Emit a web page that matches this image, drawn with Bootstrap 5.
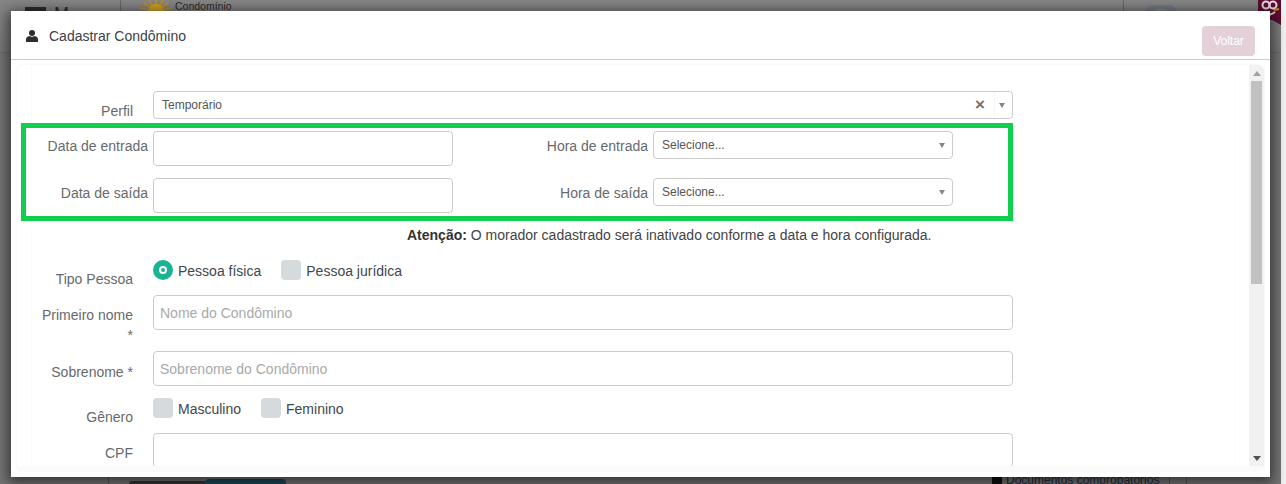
<!DOCTYPE html>
<html lang="pt-BR">
<head>
<meta charset="utf-8">
<title>Cadastrar Condômino</title>
<link href="https://cdn.jsdelivr.net/npm/bootstrap@5.3.0/dist/css/bootstrap.min.css" rel="stylesheet">
<style>
html,body{height:484px;overflow:hidden;background:#f1f1f1;font-family:"Liberation Sans",Arial,sans-serif;font-size:14px;color:#676a6c}
.back-page{width:1281px;height:484px;background:#757575;position:relative}
.back-top{height:53px;background:linear-gradient(#868686,#777);border-bottom:1px solid #6a6a6a;position:relative}
.back-menu{width:121px;height:52px;border-right:1px solid #666;padding:7px 0 0 25px;gap:8px}
.burger{width:21px;height:4px;background:#2c2c2c;flex:none}
.back-m{font-size:18px;line-height:14px;color:#2c2c2c}
.back-logo{gap:1px;padding-left:17px;height:11px;overflow:hidden}
.back-name{font-size:10.5px;line-height:10px;color:#2b2b2b;margin-top:1px}
.back-user{width:135px;height:52px;border-left:1px solid #666;padding-left:18px}
.back-bottom{height:8px;overflow:hidden;padding-left:108px;position:absolute;left:0;right:0;bottom:0;border-left:0}
.back-cell{border-left:1px solid #555;height:8px}
.btn-dark-back{width:76px;height:3px;margin:5px 0 0 20px;background:#333;border-radius:3px 0 0 0}
.btn-teal-back{width:81px;height:5px;margin-top:3px;background:#1d4a56;border-radius:4px 4px 0 0}
.docs{width:188px;margin-left:696px;padding-left:10px;border-right:1px solid #555;gap:4px;font-size:12px;line-height:8px;color:#1f2b38;height:8px;white-space:nowrap}
.doc-ico{width:10px;height:8px;background:#111;flex:none}
.docs-end{width:17px;height:8px;border-right:1px solid #555}

.dlg{position:absolute;left:11px;top:11px;width:1259px;height:466px;background:#fff;box-shadow:0 3px 12px 3px rgba(0,0,0,.55)}
.dlg-head{height:49px;border-bottom:1px solid #ccc;padding:0 15px}
.dlg-title{font-size:14px;line-height:20px;color:#3b4148;margin:0 0 0 11px}
.dlg-back{width:53px;height:30px;margin-top:15px;padding:0;font-size:12px;line-height:30px;color:#fff;background:#e4d0d8;border:0;border-radius:4px;opacity:1}
.dlg-icon{margin-top:1px}
.panel-wrap{height:406px;margin:5px 6px 0;background:#fbfbfb;border-radius:6px;overflow:hidden;box-shadow:0 0 3px rgba(0,0,0,.06)}
.panel-scroll{height:401px;background:#fff;overflow:hidden}
.panel-form{width:1232px;height:401px;overflow:hidden;position:relative}
.sbar{width:15px;height:401px;background:#f1f1f1;padding-top:6px}
.sbar-thumb{width:11px;height:203px;margin:5px 2px 0;background:#c1c1c1}
.sbar-up{width:0;height:0;margin:0 auto;border:4px solid transparent;border-top:0;border-bottom:5px solid #a3a3a3}
.sbar-down{width:0;height:0;margin:172px auto 0;border:4px solid transparent;border-bottom:0;border-top:5px solid #505050}
.form-line{display:flex;align-items:flex-start}
.lbl-a{width:116px;margin:0 20px 0 0;text-align:right;font-size:14px;line-height:20px;color:#676a6c;flex:none}
.lbl-b{margin:5px 5px 0 0;text-align:right;font-size:14px;line-height:20px;color:#676a6c;flex:none}
.first-lbl{width:122px}
.second-lbl{width:195px}
.text-in.form-control{height:35px;padding:0 6px;font-size:14px;color:#555;border:1px solid #ccc;border-radius:4px;background:#fff;box-shadow:none}
.text-in.form-control::placeholder{color:#a9a9a9;opacity:1}
.w-full{width:860px}
.w-half{width:300px;flex:none}
.pick{height:28px;border:1px solid #ccc;border-radius:4px;background:#fff;font-size:12px;line-height:24px;color:#555;padding:0 8px;flex:none}
.pick-arrow{width:0;height:0;border-left:3px solid transparent;border-right:3px solid transparent;border-top:5px solid #888;margin-right:-1px;flex:none}
.pick-x{font-size:17px;font-weight:700;color:#707070;line-height:24px;margin-right:9px}
.pick-sep{border-left:1px solid #f6f6f6;height:26px;margin-right:4px}
.green-box{width:992px;height:98px;margin:2px 0 0 4px;border:5px solid #10cf4c;padding-top:3px;position:relative;z-index:1;background:#fff}
.note{margin:4px 0 0 390px;line-height:20px;color:#444;font-size:14px;white-space:nowrap}
.note b{color:#333}
.opt-row{gap:20px;line-height:22px;color:#3f464d;font-size:14px}
.opt{gap:5px}
.box{width:20px;height:20px;border-radius:4px;background:#d5dbdd;flex:none}
.dot{width:20px;height:20px;border-radius:50%;background:#fff;border:6px solid #1ab394;flex:none;position:relative}
.dot::after{content:"";display:block;width:4px;height:4px;border-radius:50%;background:#1ab394;position:absolute;left:2px;top:2px}
.guide{position:absolute;left:14px;top:0;bottom:0;border-left:1px solid #fbfbfb}
.guide-end{position:absolute;right:14px;top:0;bottom:0;border-left:1px solid #fcfcfc}
</style>
</head>
<body>
<div class="back-page">
  <div class="back-top d-flex">
    <div class="back-menu d-flex align-items-start"><span class="burger"></span><span class="back-m">M</span></div>
    <div class="back-logo d-flex flex-grow-1">
      <svg width="36" height="11" viewBox="0 0 36 11" aria-hidden="true"><g stroke="#c4921a" stroke-width="1.6"><path d="M18 12 18 0M18 12 11 0M18 12 25 0M18 12 6 3M18 12 30 3M18 12 2 8M18 12 34 8"/></g><circle cx="18" cy="12" r="8" fill="#cf9f22"/></svg>
      <span class="back-name">Condomínio</span>
    </div>
    <div class="back-user">
      <svg width="40" height="12" viewBox="0 0 40 12" aria-hidden="true"><circle cx="19" cy="15" r="15" fill="#868686" stroke="#737986" stroke-width="7"/></svg>
    </div>
    <svg class="flex-none" width="23" height="25" viewBox="0 0 23 25" aria-hidden="true"><path d="M0 0H23V25L14 20 0 20Z" fill="#5f0c33"/><circle cx="8" cy="5" r="3.500" fill="none" stroke="#ead9de" stroke-width="2"/><circle cx="15" cy="5" r="3.500" fill="none" stroke="#ead9de" stroke-width="2"/><path d="M5 12Q11 17 17 12" fill="none" stroke="#ead9de" stroke-width="2"/><path d="M16 10l5-1" stroke="#c4921a" stroke-width="2"/></svg>
  </div>
  <div class="back-bottom d-flex">
    <div class="back-cell d-flex">
      <span class="btn-dark-back"></span><span class="btn-teal-back"></span>
    </div>
    <div class="docs d-flex"><span class="doc-ico"></span><span>Documentos comprobatórios</span></div>
    <div class="docs-end"></div>
  </div>
</div>

<div class="dlg">
  <div class="dlg-head d-flex justify-content-between">
    <div class="d-flex align-items-center dlg-icon">
      <svg width="12" height="12" viewBox="0 0 12 12" aria-hidden="true"><circle cx="6" cy="3" r="3" fill="#2d2d2d"/><path d="M0 12V9.500C0 7.500 1.500 6.300 3.500 6 4.500 7 7.500 7 8.500 6 10.500 6.300 12 7.500 12 9.500V12Z" fill="#2d2d2d"/></svg>
      <h1 class="dlg-title fw-normal">Cadastrar Condômino</h1>
    </div>
    <button type="button" class="btn dlg-back">Voltar</button>
  </div>
  <div class="panel-wrap">
    <div class="panel-scroll d-flex">
      <div class="panel-form flex-grow-1">
        <span class="guide"></span>
        <span class="guide-end"></span>
        <div class="form-line" style="margin-top:26px">
          <label class="lbl-a" style="padding-top:10px">Perfil</label>
          <div class="pick w-full d-flex align-items-center justify-content-between">
            <span>Temporário</span>
            <span class="d-flex align-items-center"><span class="pick-x">×</span><span class="pick-sep"></span><span class="pick-arrow"></span></span>
          </div>
        </div>
        <div class="green-box">
          <div class="form-line">
            <label class="lbl-b first-lbl">Data de entrada</label>
            <input class="form-control text-in w-half" type="text" aria-label="Data de entrada">
            <label class="lbl-b second-lbl">Hora de entrada</label>
            <div class="pick w-half d-flex align-items-center justify-content-between"><span>Selecione...</span><span class="pick-arrow"></span></div>
          </div>
          <div class="form-line" style="margin-top:12px">
            <label class="lbl-b first-lbl">Data de saída</label>
            <input class="form-control text-in w-half" type="text" aria-label="Data de saída">
            <label class="lbl-b second-lbl">Hora de saída</label>
            <div class="pick w-half d-flex align-items-center justify-content-between"><span>Selecione...</span><span class="pick-arrow"></span></div>
          </div>
        </div>
        <p class="note"><b>Atenção:</b> O morador cadastrado será inativado conforme a data e hora configurada.</p>
        <div class="form-line" style="margin-top:15px">
          <label class="lbl-a" style="padding-top:9px">Tipo Pessoa</label>
          <div class="opt-row d-flex">
            <span class="opt d-flex"><span class="dot"></span>Pessoa física</span>
            <span class="opt d-flex"><span class="box"></span>Pessoa jurídica</span>
          </div>
        </div>
        <div class="form-line" style="margin-top:6px;height:49px">
          <label class="lbl-a" style="padding-top:10px">Primeiro nome<br>*</label>
          <input class="form-control text-in w-full" type="text" placeholder="Nome do Condômino">
        </div>
        <div class="form-line" style="margin-top:7px">
          <label class="lbl-a" style="padding-top:11px">Sobrenome *</label>
          <input class="form-control text-in w-full" type="text" placeholder="Sobrenome do Condômino">
        </div>
        <div class="form-line" style="margin-top:12px">
          <label class="lbl-a" style="padding-top:9px">Gênero</label>
          <div class="opt-row d-flex">
            <span class="opt d-flex"><span class="box"></span>Masculino</span>
            <span class="opt d-flex"><span class="box"></span>Feminino</span>
          </div>
        </div>
        <div class="form-line" style="margin-top:6px">
          <label class="lbl-a" style="padding-top:10px">CPF</label>
          <input class="form-control text-in w-full" type="text" aria-label="CPF">
        </div>
      </div>
      <div class="sbar flex-shrink-0">
        <div class="sbar-up"></div>
        <div class="sbar-thumb"></div>
        <div class="sbar-down"></div>
      </div>
    </div>
  </div>
</div>
<script src="https://cdn.jsdelivr.net/npm/bootstrap@5.3.0/dist/js/bootstrap.bundle.min.js"></script>
</body>
</html>
